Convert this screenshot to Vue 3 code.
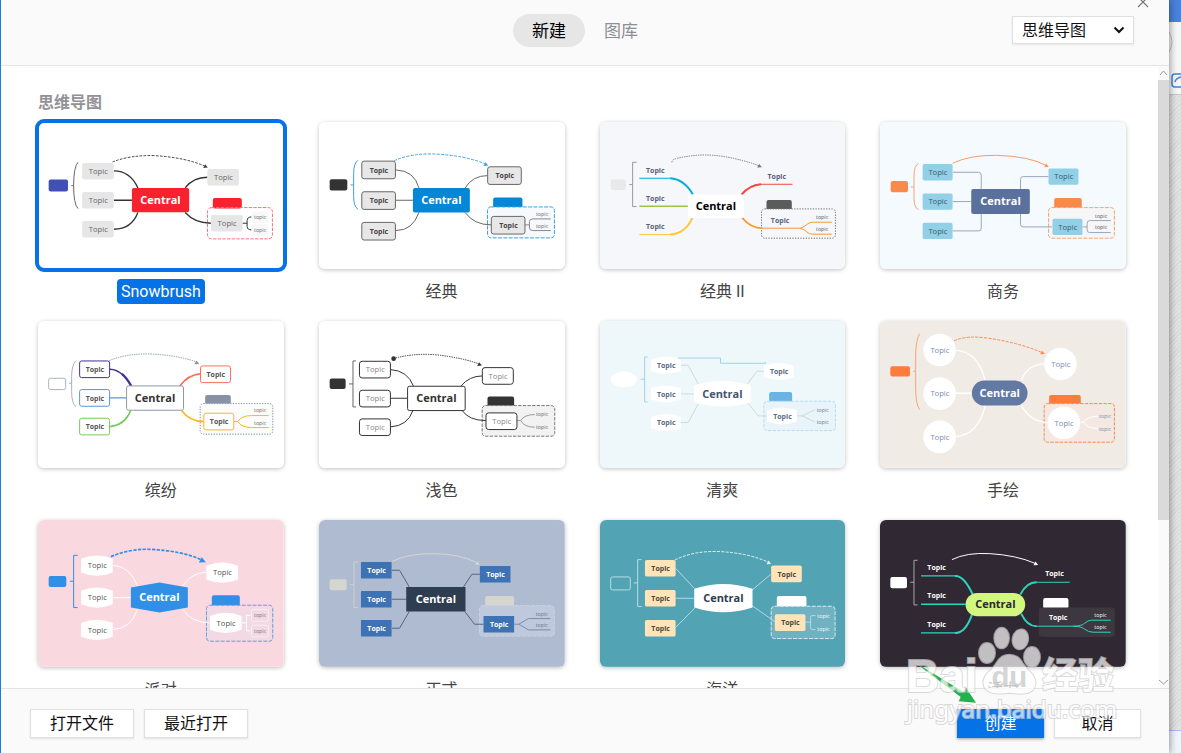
<template>
  <div class="screen">
    <div class="dialog">
      <!-- header -->
      <header class="top-bar">
        <nav class="tabs" role="tablist">
          <button
            v-for="tab in tabs"
            :key="tab"
            class="tab"
            :class="{ active: currentTab === tab }"
            role="tab"
            :aria-selected="currentTab === tab"
            @click="currentTab = tab"
          >{{ tab }}</button>
        </nav>
        <div class="kind">
          <select v-model="kind" aria-label="思维导图">
            <option>思维导图</option>
          </select>
          <svg class="kind-arrow" viewBox="0 0 12 8" aria-hidden="true">
            <path d="M1.5 1.5 L6 6 L10.5 1.5" fill="none" stroke="#111" stroke-width="2" />
          </svg>
        </div>
        <button class="close" aria-label="关闭">
          <svg viewBox="0 0 12 12"><path d="M1 1 L11 11 M11 1 L1 11" stroke="#777" stroke-width="1.2" /></svg>
        </button>
      </header>

      <!-- theme list -->
      <div class="middle">
        <main class="content">
          <h2>思维导图</h2>
          <div class="grid">
            <button
              v-for="t in themes"
              :key="t.name"
              class="theme"
              :class="{ selected: selected === t.name }"
              @click="selected = t.name"
            >
              <svg class="thumb" viewBox="0 0 738 441">
                <rect width="738" height="441" :fill="t.bg" />
                <g :transform="`translate(${-t.origin[0]} ${-t.origin[1]})`" fill="none">
                  <path :d="shape(t.marker)" :fill="t.marker.fill" :stroke="t.marker.stroke" stroke-width="3" />
                  <path :d="t.bracket[0]" :stroke="t.bracket[1]" stroke-width="3" />
                  <path :d="t.arc.d" :stroke="t.arc.color" :stroke-width="t.arc.width || 3" :stroke-dasharray="t.arc.dash" />
                  <path v-if="t.arc.tip" :d="arrowHead(t.arc)" :fill="t.arc.color" />
                  <circle v-if="t.arc.dot" :cx="t.arc.dot[0]" :cy="t.arc.dot[1]" r="7" :fill="t.arc.color" />
                  <path :d="shape(t.tab)" :fill="t.tab.fill" />
                  <path :d="shape(t.group)" :fill="t.group.fill" :stroke="t.group.stroke" stroke-width="3" :stroke-dasharray="t.group.dash" />
                  <path
                    v-for="(l, i) in t.links"
                    :key="'l' + i"
                    :d="l[0]"
                    :stroke="l[1] || t.linkColor"
                    :stroke-width="l[2] || 3"
                  />
                  <template v-for="(n, i) in t.nodes" :key="'n' + i">
                    <path
                      v-if="t.node.w"
                      :d="shape(nodeBox(t.node, n))"
                      :fill="t.node.fill"
                      :stroke="t.node.strokes ? t.node.strokes[i] : t.node.stroke"
                      stroke-width="3"
                    />
                    <text
                      :x="n[0] + 1"
                      :y="n[1] + 8"
                      class="topic"
                      :class="{ strong: t.node.strong }"
                      :fill="t.node.color"
                    >Topic</text>
                  </template>
                  <path :d="shape(t.centre)" :fill="t.centre.fill" :stroke="t.centre.stroke" stroke-width="3" />
                  <text
                    :x="t.centre.x + t.centre.w / 2"
                    :y="Math.round(t.centre.y + t.centre.h / 2) + 11"
                    class="central"
                    :fill="t.centre.color"
                  >Central</text>
                  <template v-for="(s, i) in t.subs" :key="'s' + i">
                    <rect
                      v-if="t.subBox"
                      :x="s[0] - 26"
                      :y="s[1] - 17"
                      width="51"
                      height="35"
                      rx="6"
                      :fill="t.subBox.fill"
                      :stroke="t.subBox.stroke"
                      stroke-width="3"
                    />
                    <text :x="s[0]" :y="s[1] + 5" class="sub" :fill="t.subColor">topic</text>
                  </template>
                </g>
              </svg>
              <span class="name">{{ t.name }}</span>
            </button>
          </div>
        </main>
        <div class="scrollbar">
          <svg viewBox="0 0 11 14"><path d="M2 9 L5.5 5 L9 9" fill="none" stroke="#999" /></svg>
          <div class="track"><div class="bar"></div></div>
          <svg viewBox="0 0 11 14"><path d="M1 6 L5.5 10 L10 6" fill="none" stroke="#999" /></svg>
        </div>
      </div>

      <!-- footer -->
      <footer class="bottom-bar">
        <button class="btn wide">打开文件</button>
        <button class="btn wide">最近打开</button>
        <span class="space"></span>
        <button class="btn primary">创建</button>
        <button class="btn">取消</button>
      </footer>
    </div>

    <!-- window behind the dialog -->
    <aside class="behind">
      <div class="behind-title"></div>
      <div class="behind-tools">
        <svg viewBox="0 0 12 72">
          <path d="M0 10 Q6 20 0 30" fill="none" stroke="#c4c4c4" />
          <path d="M12 52 H6 Q3 52 3 55 V62 Q3 65 6 65 H12 M6 60 Q7 56 12 55" fill="none" stroke="#3b87d9" stroke-width="1.5" />
        </svg>
      </div>
      <div class="behind-canvas"></div>
      <div class="behind-status"></div>
    </aside>

    <svg class="watermark" viewBox="90 330 663 330" aria-hidden="true">
      <path d="M133 456 L280 545 L288 533 L318 578 L266 574 L272 561 Z" fill="#22b14c" />
      <g class="ink">
        <ellipse cx="351" cy="429" rx="24" ry="30" />
        <ellipse cx="395" cy="384" rx="22" ry="31" />
        <ellipse cx="451" cy="388" rx="23" ry="30" transform="rotate(12 451 388)" />
        <ellipse cx="486" cy="441" rx="24" ry="30" />
        <path d="M418 434 Q444 434 458 460 Q470 478 488 494 Q506 522 486 542 Q468 556 418 548 Q370 556 350 540 Q330 520 350 492 Q368 478 380 458 Q394 434 418 434 Z" />
        <text x="108" y="545" class="wm-logo">Bai</text>
        <text x="516" y="538" class="wm-cjk">经验</text>
        <text x="110" y="624" class="wm-url">jingyan.baidu.com</text>
      </g>
      <text x="418" y="532" class="wm-du">du</text>
    </svg>
  </div>
</template>

<script setup>
import { ref } from 'vue'

const tabs = ['新建', '图库']
const currentTab = ref('新建')
const kind = ref('思维导图')
const selected = ref('Snowbrush')

/* ------------------------
   Shapes
------------------------ */
function shape({ x, y, w, h, r = 6, type }) {
  const x2 = x + w
  const y2 = y + h
  const mx = x + w / 2
  if (type === 'barrel') {
    const b = h / 6
    return `M${x} ${y + b} Q${mx} ${y - b} ${x2} ${y + b} V${y2 - b} Q${mx} ${y2 + b} ${x} ${y2 - b} Z`
  }
  if (type === 'hex') {
    const b = h / 6
    return `M${x} ${y + b} L${mx} ${y} L${x2} ${y + b} V${y2 - b} L${mx} ${y2} L${x} ${y2 - b} Z`
  }
  if (type === 'oval') {
    return `M${x} ${y + h / 2} a${w / 2} ${h / 2} 0 1 1 ${w} 0 a${w / 2} ${h / 2} 0 1 1 ${-w} 0 Z`
  }
  return `M${x + r} ${y} H${x2 - r} A${r} ${r} 0 0 1 ${x2} ${y + r} V${y2 - r} A${r} ${r} 0 0 1 ${x2 - r} ${y2} H${x + r} A${r} ${r} 0 0 1 ${x} ${y2 - r} V${y + r} A${r} ${r} 0 0 1 ${x + r} ${y} Z`
}

function nodeBox(node, [cx, cy]) {
  return { ...node, x: cx - node.w / 2, y: cy - node.h / 2 }
}

function arrowHead({ tip: [x, y], size = 1 }) {
  return `M${x} ${y} L${x - 8 * size} ${y - 10 * size} L${x - 14 * size} ${y + 1} Z`
}

const box = (x, y, w, h, fill, rest = {}) => ({ x, y, w, h, fill, ...rest })

/* ------------------------
   Themes
------------------------ */
const themes = [
  {
    name: 'Snowbrush',
    bg: '#fff',
    origin: [114, 96],
    marker: box(146, 269, 58, 36, '#4050b5'),
    bracket: ['M234 217 Q221 232 221 287 Q221 342 234 356 M214 287 H221', '#666'],
    arc: { d: 'M338 216 Q390 195 465 197 Q560 203 618 230', color: '#444', dash: '8 4', tip: [624, 233] },
    tab: box(639, 324, 87, 32, '#f8222f'),
    group: box(623, 353, 195, 94, 'none', { r: 12, stroke: '#fa6f78', dash: '10 4' }),
    linkColor: '#333',
    links: [
      ['M342 243 Q390 243 414 294', '', 4],
      ['M342 331 H396', '', 4],
      ['M342 418 Q395 418 414 368', '', 4],
      ['M556 294 Q580 262 623 262', '', 4],
      ['M556 368 Q585 400 633 400', '', 4],
      ['M728 400 H742 M756 381 Q742 381 742 392 V410 Q742 420 756 420'],
    ],
    node: { w: 95, h: 50, fill: '#e6e6e6', color: '#666' },
    nodes: [[294, 244], [294, 331], [294, 418], [670, 262], [681, 400]],
    centre: box(396, 294, 172, 73, '#f8222f', { color: '#fff' }),
    subs: [[781, 382], [781, 420]],
    subBox: { fill: '#f8f8f8' },
    subColor: '#666',
  },
  {
    name: '经典',
    bg: '#fff',
    origin: [54, 36],
    marker: box(86, 208, 53, 34, '#333'),
    bracket: ['M171 151 Q158 160 158 190 V260 Q158 290 171 298 M149 225 H158', '#3ea0dc'],
    arc: { d: 'M280 152 Q330 130 400 132 Q490 136 555 162', color: '#3ea0dc', dash: '9 4', tip: [562, 167] },
    tab: box(577, 263, 88, 32, '#0487d6'),
    group: box(560, 291, 201, 93, '#f6fafe', { r: 10, stroke: '#3ea0dc', dash: '12 4' }),
    linkColor: '#666',
    links: [
      ['M285 180 Q340 182 354 234'],
      ['M285 271 H336'],
      ['M285 362 Q335 362 354 308'],
      ['M493 234 Q515 197 560 197'],
      ['M493 308 Q520 345 571 345'],
      ['M673 345 H686 M750 327 H696 Q686 327 686 335 V354 Q686 362 696 362 H750', '#888'],
    ],
    node: { w: 101, h: 53, r: 7, fill: '#e7e7e7', stroke: '#666', color: '#444', strong: true },
    nodes: [[233, 180], [233, 272], [233, 364], [611, 197], [622, 346]],
    centre: box(336, 234, 171, 74, '#0487d6', { color: '#fff' }),
    subs: [[724, 313], [724, 349]],
    subColor: '#666',
  },
  {
    name: '经典 II',
    bg: '#f6f7fa',
    origin: [27, 36],
    marker: box(59, 209, 46, 31, '#e9e9e9'),
    bracket: ['M137 157 H125 V290 H137 M115 224 H125', '#999'],
    arc: { d: 'M243 157 Q243 148 260 145 Q330 128 400 140 Q460 150 506 168', color: '#777', dash: '4 3', tip: [513, 172] },
    tab: box(527, 270, 76, 32, '#5b5b5b'),
    group: box(512, 297, 222, 88, '#f6f7fa', { r: 10, stroke: '#777', dash: '4 4' }),
    links: [
      ['M145 205 H240', '#06add6'],
      ['M238 205 Q280 208 306 254', '#06add6', 6],
      ['M145 289 H291', '#9bc53c', 4],
      ['M145 374 H240', '#fdc83b'],
      ['M238 374 Q285 370 304 324', '#fdc83b', 6],
      ['M605 223 H505', '#f04a3e'],
      ['M510 223 Q475 226 452 254', '#f04a3e', 6],
      ['M454 324 Q480 355 515 355', '#f99830', 5],
      ['M512 355 H628 Q640 352 648 344 Q656 337 665 337 H723 M628 355 Q640 358 648 366 Q656 373 665 373 H723', '#f99830'],
    ],
    node: { color: '#56637a', strong: true },
    nodes: [[192, 182], [192, 266], [192, 350], [557, 200], [567, 332]],
    centre: box(291, 254, 168, 70, '#fff', { color: '#000' }),
    subs: [[694, 322], [694, 358]],
    subColor: '#556',
  },
  {
    name: '商务',
    bg: '#f4fafe',
    origin: [30, 36],
    marker: box(62, 213, 52, 34, '#f98a4a'),
    bracket: ['M146 161 Q132 165 132 200 V262 Q132 295 146 299 M123 231 H132', '#f9a373'],
    arc: { d: 'M248 160 Q300 135 380 136 Q480 139 530 167', color: '#f99a66', tip: [537, 171] },
    tab: box(553, 264, 83, 32, '#f98a4a'),
    group: box(536, 293, 198, 92, '#f6f6f6', { r: 10, stroke: '#f9a373', dash: '12 4' }),
    linkColor: '#9aa6bd',
    links: [
      ['M248 187 H326 Q334 187 334 195 V237'],
      ['M248 275 H304'],
      ['M248 363 H326 Q334 363 334 355 V312'],
      ['M536 200 H460 Q452 200 452 208 V237'],
      ['M452 312 V343 Q452 351 460 351 H547'],
      ['M638 351 H652 M723 332 H660 Q652 332 652 340 V360 Q652 368 660 368 H723'],
    ],
    node: { w: 90, h: 49, r: 5, fill: '#92d0e8', color: '#3d5a68' },
    nodes: [[203, 187], [203, 275], [203, 363], [581, 200], [593, 351]],
    centre: box(304, 237, 176, 75, '#5a719d', { color: '#fff' }),
    subs: [[694, 319], [694, 352]],
    subColor: '#556',
  },
  {
    name: '缤纷',
    bg: '#fff',
    origin: [114, 33],
    marker: box(146, 205, 51, 34, '#fff', { stroke: '#a9b2bf' }),
    bracket: ['M228 152 Q215 165 215 200 V245 Q215 280 228 291 M207 220 H215', '#a9b2bf'],
    arc: { d: 'M328 152 Q380 130 450 132 Q535 136 590 156', color: '#8793a5', dash: '4 3', tip: [598, 162] },
    tab: box(616, 255, 77, 32, '#8793a5'),
    group: box(601, 281, 218, 92, '#fcfcfc', { r: 10, stroke: '#8793a5', dash: '4 4' }),
    linkColor: '#fdb61c',
    links: [
      ['M330 178 Q350 178 370 196', '#403294', 4],
      ['M366 192 Q380 204 394 228', '#403294', 7],
      ['M330 264 H380', '#5a93dd', 4],
      ['M330 350 Q375 345 392 302', '#74c95f', 5],
      ['M601 192 Q565 195 540 228', '#fc6d5c', 5],
      ['M545 302 Q570 335 611 335', '', 5],
      ['M703 335 H714 Q725 317 755 317 H807 M714 335 Q725 353 755 353 H807'],
    ],
    node: {
      w: 90,
      h: 50,
      fill: '#fff',
      strokes: ['#403294', '#5a93dd', '#74c95f', '#fc6d5c', '#fdb61c'],
      color: '#555',
      strong: true,
    },
    nodes: [[284, 178], [284, 264], [284, 350], [647, 193], [657, 335]],
    centre: box(380, 228, 171, 73, '#fff', { stroke: '#8c98a8', color: '#333' }),
    subs: [[781, 300], [781, 339]],
    subColor: '#666',
  },
  {
    name: '浅色',
    bg: '#fff',
    origin: [54, 33],
    marker: box(86, 206, 48, 31, '#333'),
    bracket: ['M165 153 H156 V291 H165 M144 222 H156', '#666'],
    arc: { d: 'M278 146 Q330 130 400 134 Q480 142 535 162', color: '#333', dash: '4 3', dot: [278, 146], tip: [543, 167] },
    tab: box(560, 260, 80, 32, '#333'),
    group: box(544, 287, 218, 92, '#f2f2f2', { r: 10, stroke: '#777', dash: '10 4' }),
    linkColor: '#333',
    links: [
      ['M269 179 Q320 182 338 229'],
      ['M269 265 H320'],
      ['M269 351 Q320 348 336 302'],
      ['M480 229 Q505 198 544 198'],
      ['M484 302 Q505 332 555 332'],
      ['M649 332 H660 Q670 314 702 314 M660 332 Q670 352 702 352', '#999'],
    ],
    node: { w: 93, h: 50, r: 8, fill: '#fff', stroke: '#333', color: '#888' },
    nodes: [[222, 179], [222, 266], [222, 352], [591, 198], [602, 334]],
    centre: box(320, 229, 173, 73, '#fff', { stroke: '#333', color: '#333' }),
    subs: [[724, 313], [724, 352]],
    subColor: '#666',
  },
  {
    name: '清爽',
    bg: '#eef8fb',
    origin: [27, 33],
    marker: box(59, 185, 79, 47, '#fff', { type: 'oval' }),
    bracket: ['M170 141 H161 V276 H170 M149 208 H161', '#a5d0ea'],
    arc: { d: 'M262 144 H389 V160 H524 V156', color: '#a5d0ea' },
    tab: box(535, 246, 69, 32, '#6bb3e2'),
    group: box(519, 274, 215, 88, '#e9f3fa', { r: 10, stroke: '#b9dcf0', dash: '10 4' }),
    linkColor: '#ccdadd',
    links: [
      ['M270 166 H292 L322 222'],
      ['M270 252 H309'],
      ['M270 338 H292 L322 282'],
      ['M519 184 H498 L470 222'],
      ['M472 280 L502 318 H530'],
      ['M618 318 H634 L672 300 M634 318 L672 336'],
    ],
    node: { type: 'barrel', w: 90, h: 51, fill: '#fff', color: '#5b6b84', strong: true },
    nodes: [[225, 166], [225, 252], [225, 338], [564, 185], [574, 318]],
    centre: box(309, 213, 171, 77, '#fff', { type: 'barrel', color: '#445670' }),
    subs: [[696, 300], [696, 336]],
    subColor: '#6b7a90',
  },
  {
    name: '手绘',
    bg: '#f0ebe5',
    origin: [30, 33],
    marker: box(61, 169, 59, 31, '#fb7c3b'),
    bracket: ['M149 71 Q137 90 137 140 V230 Q137 285 149 299 M129 184 H137', '#f9a373'],
    arc: { d: 'M253 92 Q290 76 350 84 Q440 96 515 127', color: '#f68b55', dash: '9 4', tip: [525, 132] },
    tab: box(538, 255, 95, 32, '#fb7c3b'),
    group: box(523, 281, 211, 116, '#f3e8e2', { r: 10, stroke: '#f68b55', dash: '10 4' }),
    linkColor: '#fff',
    links: [
      ['M258 121 Q325 125 346 212', '', 4],
      ['M258 250 H306', '', 4],
      ['M258 380 Q325 375 346 287', '', 4],
      ['M523 162 Q470 165 455 212', '', 4],
      ['M455 287 Q480 335 534 338', '', 4],
      ['M631 337 H642 Q650 320 685 319 M642 337 Q650 355 685 356'],
    ],
    node: { w: 98, h: 98, r: 49, fill: '#fff', color: '#7d8db0' },
    nodes: [[209, 120], [209, 251], [209, 381], [572, 162], [582, 339]],
    centre: box(306, 212, 167, 75, '#6179a3', { r: 37, color: '#fff' }),
    subs: [[706, 319], [706, 357]],
    subColor: '#7d8db0',
  },
  {
    name: '派对',
    bg: '#f9d8e0',
    origin: [114, 27],
    marker: box(146, 195, 53, 33, '#318fe5'),
    bracket: ['M233 133 H221 V290 H233 M210 211 H221', '#318fe5'],
    arc: { d: 'M333 137 Q390 113 450 115 Q545 119 606 147', color: '#318fe5', dash: '10 4', width: 5, tip: [618, 154], size: 1.5 },
    tab: box(636, 253, 84, 34, '#318fe5'),
    group: box(620, 283, 199, 108, '#f2d9e3', { r: 10, stroke: '#5f9fe2', dash: '12 4' }),
    linkColor: '#fff',
    links: [
      ['M338 163 Q390 165 413 225'],
      ['M338 260 H393'],
      ['M338 356 Q392 355 413 295'],
      ['M620 184 Q575 185 549 225'],
      ['M549 295 Q575 336 630 336'],
      ['M726 336 H740 M753 313 H740 V360 H753'],
    ],
    node: { type: 'barrel', w: 95, h: 61, fill: '#fff', color: '#555' },
    nodes: [[291, 164], [291, 260], [291, 357], [667, 185], [678, 336]],
    centre: box(393, 215, 171, 90, '#318fe5', { type: 'hex', color: '#fff' }),
    subs: [[781, 313], [781, 360]],
    subBox: { fill: '#f2d9e3', stroke: '#fbeef2' },
    subColor: '#777',
  },
  {
    name: '正式',
    bg: '#afbbd0',
    origin: [54, 27],
    marker: box(86, 205, 51, 33, '#d6d6d1'),
    bracket: ['M171 153 H159 V290 H171 M147 221 H159', '#ccd0d4'],
    arc: { d: 'M273 152 Q320 127 400 128 Q475 129 526 154', color: '#d6d6d1', tip: [537, 161] },
    tab: box(553, 255, 87, 32, '#d6d6d1'),
    group: box(536, 284, 225, 92, '#bfc9dd', { r: 10, stroke: '#c9d0de', dash: '12 4' }),
    linkColor: '#56647a',
    links: [
      ['M273 178 H296 L325 228'],
      ['M273 265 H316'],
      ['M273 352 H296 L325 302'],
      ['M537 190 H513 L488 228'],
      ['M492 302 L521 340 H548'],
      ['M641 340 H654 L683 323 H749 M654 340 L683 357 H749', '#7d8ca3'],
    ],
    node: { w: 92, h: 50, r: 1, fill: '#3d72b4', color: '#fff', strong: true },
    nodes: [[226, 178], [226, 265], [226, 352], [583, 190], [594, 340]],
    centre: box(316, 228, 178, 74, '#2e3d4f', { r: 1, color: '#fff' }),
    subs: [[723, 310], [723, 343]],
    subColor: '#66748c',
  },
  {
    name: '海洋',
    bg: '#52a4b5',
    origin: [27, 27],
    marker: box(59, 198, 59, 39, 'none', { stroke: '#b9dce4' }),
    bracket: ['M152 146 H140 V287 H152 M128 216 H140', '#b9dce4'],
    arc: { d: 'M252 147 Q310 118 390 122 Q475 127 533 154', color: '#e3f1f4', dash: '9 4', tip: [541, 159] },
    tab: box(558, 255, 89, 34, '#fff'),
    group: box(541, 286, 192, 97, '#70b2c1', { r: 10, stroke: '#d8ecf0', dash: '12 4' }),
    linkColor: '#b5d8df',
    links: [
      ['M254 172 L310 232'],
      ['M254 262 H310'],
      ['M254 350 L313 290'],
      ['M540 190 L483 238'],
      ['M483 284 L552 332'],
      ['M643 334 H659 M674 314 H664 Q659 314 659 320 V350 Q659 356 664 356 H674'],
    ],
    node: { w: 92, h: 50, r: 5, fill: '#ffe4b9', color: '#4a4636', strong: true },
    nodes: [[208, 172], [208, 262], [208, 352], [587, 189], [598, 335]],
    centre: box(310, 219, 175, 85, '#fff', { type: 'barrel', color: '#2e3d4f' }),
    subs: [[698, 315], [698, 355]],
    subColor: '#fff',
  },
  {
    name: '活力',
    bg: '#302832',
    origin: [30, 27],
    marker: box(61, 198, 50, 34, '#fff'),
    bracket: ['M143 148 H132 V282 H143 M121 214 H132', '#a9a5aa'],
    arc: { d: 'M246 146 Q290 124 360 128 Q440 133 495 157', color: '#fff', tip: [505, 162] },
    tab: box(520, 261, 76, 32, '#fff'),
    group: box(507, 290, 228, 88, '#3d3740', { r: 10 }),
    linkColor: '#2dd4bf',
    links: [
      ['M153 195 H260', '', 4],
      ['M255 195 Q282 193 308 250', '', 6],
      ['M153 280 H287', '', 4],
      ['M153 366 H260', '', 4],
      ['M255 366 Q285 369 306 312', '', 6],
      ['M600 214 H495'],
      ['M500 214 Q470 214 452 250', '', 6],
      ['M454 308 Q472 346 500 346', '', 6],
      ['M496 346 H610 Q635 346 645 337 Q655 328 665 328 H723 M610 346 Q635 346 645 355 Q655 364 670 364 H723'],
    ],
    node: { color: '#fff', strong: true },
    nodes: [[199, 170], [199, 254], [199, 341], [553, 188], [564, 320]],
    centre: box(287, 246, 179, 70, '#d2f67f', { r: 35, color: '#2c2830' }),
    subs: [[692, 313], [692, 349]],
    subColor: '#fff',
  },
]
</script>

<style>
body {
  overflow: hidden;
  background: #e2e2e2;
}
</style>

<style scoped>
.screen {
  position: relative;
  display: flex;
  height: 100vh;
  font-family: Roboto, "Noto Sans CJK SC", sans-serif;
  font-size: 16px;
  color: #111;
}

button,
select {
  font: inherit;
  color: inherit;
  cursor: pointer;
}

.dialog {
  position: relative;
  z-index: 1;
  flex: 1;
  min-width: 0;
  box-sizing: border-box;
  display: flex;
  flex-direction: column;
  border-left: 1px solid #1a7fd8;
  background: #fff;
  box-shadow: 0 0 8px rgba(0, 0, 0, 0.5);
}

/* header */
.top-bar {
  display: grid;
  grid-template-columns: 1fr auto 1fr;
  align-items: start;
  padding: 14px 35px 18px 0;
  border-bottom: 1px solid #e6e6e6;
  background: #fafafa;
}

.tabs {
  grid-column: 2;
  display: flex;
  padding-left: 35px;
}

.tab {
  height: 33px;
  padding: 1px 19px 0;
  border: none;
  border-radius: 17px;
  background: transparent;
  font-size: 17px;
  line-height: 32px;
  color: #8e8e93;
}

.tab.active {
  background: #e6e6e6;
  color: #000;
}

.kind {
  position: relative;
  justify-self: end;
  padding-top: 2px;
}

.kind select {
  display: block;
  width: 122px;
  height: 28px;
  padding: 1px 9px 0;
  border: 1px solid #e0e0e0;
  border-radius: 0;
  background: #fff;
  appearance: none;
  box-shadow: 0 1px 2px rgba(0, 0, 0, 0.08);
}

.kind-arrow {
  position: absolute;
  top: 12px;
  right: 9px;
  width: 12px;
  height: 8px;
  pointer-events: none;
}

.close {
  position: absolute;
  top: -4px;
  right: 20px;
  width: 12px;
  height: 12px;
  padding: 0;
  border: none;
  background: none;
}

.close svg {
  display: block;
}

/* theme list */
.middle {
  flex: 1;
  min-height: 0;
  display: flex;
}

.content {
  flex: 1;
  min-width: 0;
  padding: 25px 32px 0 37px;
  overflow: hidden;
}

h2 {
  margin: 0 0 7px;
  font-size: 16px;
  font-weight: 700;
  line-height: 24px;
  color: #929296;
}

.grid {
  display: grid;
  grid-template-columns: repeat(4, 1fr);
  gap: 17px 35px;
}

.theme {
  display: flex;
  flex-direction: column;
  align-items: center;
  gap: 10px;
  padding: 0;
  border: none;
  background: none;
}

.thumb {
  display: block;
  width: 100%;
  border-radius: 6px;
  box-shadow: 0 1px 4px rgba(0, 0, 0, 0.25);
  font-family: "Open Sans", "Noto Sans", sans-serif;
}

.name {
  padding: 1px 4px 0;
  border-radius: 4px;
  font-size: 16px;
  line-height: 24px;
  color: #444;
}

.selected .thumb {
  outline: 4px solid #0572e8;
  outline-offset: -1px;
  box-shadow: none;
}

.selected .name {
  background: #0572e8;
  color: #fff;
}

.topic {
  font-size: 23px;
  text-anchor: middle;
}

.topic.strong {
  font-size: 21px;
  font-weight: 700;
}

.central {
  font-size: 33px;
  font-weight: 700;
  text-anchor: middle;
}

.sub {
  font-size: 16px;
  text-anchor: middle;
}

/* scrollbar */
.scrollbar {
  width: 11px;
  display: flex;
  flex-direction: column;
  background: #fafafa;
}

.scrollbar svg {
  display: block;
  height: 14px;
}

.track {
  flex: 1;
}

.bar {
  height: 74%;
  background: #dadada;
}

/* footer */
.bottom-bar {
  display: flex;
  gap: 10px;
  padding: 20px 28px 15px 29px;
  border-top: 1px solid #e3e3e3;
  background: #fafafa;
}

.space {
  flex: 1;
}

.btn {
  width: 87px;
  height: 29px;
  padding: 1px 0 0;
  border: 1px solid #e0e0e0;
  background: #fff;
  line-height: 26px;
  box-shadow: 0 1px 2px rgba(0, 0, 0, 0.1);
}

.btn.wide {
  width: 104px;
}

.btn.primary {
  border-color: #0572e8;
  background: #0572e8;
  color: #fff;
  box-shadow: 0 1px 3px rgba(0, 0, 0, 0.4);
}

/* window behind */
.behind {
  width: 12px;
  display: flex;
  flex-direction: column;
}

.behind-title {
  height: 22px;
  background: #4a82dc;
}

.behind-tools {
  height: 72px;
  border-bottom: 1px solid #c8c8c8;
  background: #f7f7f7;
}

.behind-tools svg {
  display: block;
}

.behind-canvas {
  flex: 1;
  background: repeating-linear-gradient(135deg, #e4e4e4 0 2px, #dadada 2px 3px);
}

.behind-status {
  height: 22px;
  border-top: 1px solid #a9bfee;
  background: #f0f4fc;
}

/* watermark */
.watermark {
  position: absolute;
  z-index: 2;
  right: 60px;
  bottom: 23px;
  width: 221px;
  height: 110px;
  pointer-events: none;
}

.ink {
  fill: #fff;
  stroke: #ccc;
  stroke-width: 6px;
  paint-order: stroke;
  opacity: 0.7;
}

.wm-logo {
  font: 700 138px "Liberation Sans", sans-serif;
}

.wm-cjk {
  font: 700 108px "Noto Sans CJK SC", sans-serif;
}

.wm-url {
  font: 400 73px "Noto Sans", sans-serif;
}

.wm-du {
  font: 700 88px "Liberation Sans", sans-serif;
  text-anchor: middle;
  fill: #c4c4c4;
  opacity: 0.7;
}
</style>
